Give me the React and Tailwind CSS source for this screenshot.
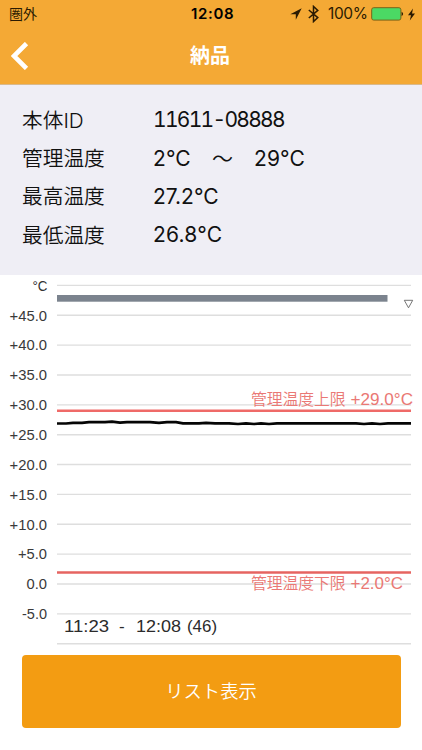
const SYSTEM = "font-['Inter','Noto_Sans_CJK_JP',sans-serif]";

const readings = [
  { label: '本体ID', value: '11611-08888', spacing: 'tabular-nums tracking-[-1.72px]' },
  {
    label: '管理温度',
    value: <>2°C<span className="font-[350]">　～　</span>29°C</>,
    spacing: 'tracking-[0.1px]',
  },
  { label: '最高温度', value: '27.2°C', spacing: 'tracking-[0px]' },
  { label: '最低温度', value: '26.8°C', spacing: 'tracking-[0.2px]' },
];

// [label, left edge of the text]
const ticks = [
  ['+45.0', 9.5], ['+40.0', 9.5], ['+35.0', 9.5], ['+30.0', 9.5], ['+25.0', 9.5], ['+20.0', 9.5],
  ['+15.0', 9.5], ['+10.0', 9.5], ['+5.0', 18], ['0.0', 26.5], ['-5.0', 22],
];

const gridY = (i) => 285.4 + i * 29.86;

function StatusBar() {
  return (
    <div className="relative flex h-7 items-center justify-between pl-[9px] pr-[7px] text-[#2b1b02]">
      <span className="text-[14px] leading-7">圏外</span>
      <span className="absolute left-[191px] text-[15px] font-semibold leading-7 tracking-[0.65px] text-black">12:08</span>
      <div className="flex items-center">
        <svg width="12" height="12" viewBox="0 0 12 12" className="mr-[6px]">
          <path d="M11.7 0.3 L0.3 6.2 H5.8 V11.7 Z" fill="#2b1b02" />
        </svg>
        <svg width="11" height="18" viewBox="0 0 11 18" className="mr-[9px]">
          <path d="M0.8 5 L9.8 12.6 L5.5 16.6 V1.4 L9.8 5.4 L0.8 13" fill="none" stroke="#2b1b02" strokeWidth="1.5" />
        </svg>
        <span className="mr-[4px] w-[39px] whitespace-nowrap text-[15.5px] leading-7 tracking-[-0.4px]">100%</span>
        <svg width="33" height="14" viewBox="0 0 33 14" className="mr-[4px]">
          <rect x="0.7" y="0.7" width="29.2" height="12.4" rx="2" fill="#4bd964" stroke="#7a6318" strokeWidth="1" />
          <path d="M30.6 4.8 Q33.6 7 30.6 9.2 Z" fill="#2b1b02" />
        </svg>
        <svg width="7" height="13" viewBox="0 0 7 13">
          <path d="M5 0.5 L0 7.3 H3 L1.8 12.5 L7 5.6 H4 Z" fill="#2b1b02" />
        </svg>
      </div>
    </div>
  );
}

function Chart() {
  return (
    <svg
      width="422"
      height="372"
      viewBox="0 275 422 372"
      className="block font-['Liberation_Sans','Noto_Sans_CJK_JP',sans-serif]"
    >
      {Array.from({ length: 13 }, (_, i) => (
        <line key={i} x1="57" x2="411" y1={gridY(i)} y2={gridY(i)} stroke="#dedede" strokeWidth="1.4" />
      ))}
      <text x="32.5" y="291" fontSize="14.5" fill="#333" textLength="15" lengthAdjust="spacingAndGlyphs">°C</text>
      {ticks.map(([label, x], i) => (
        <text key={label} x={x} y={320.6 + i * 29.86} fontSize="14.3" fill="#3a3a3a" textLength={47 - x} lengthAdjust="spacingAndGlyphs">
          {label}
        </text>
      ))}
      <rect x="57" y="295" width="330.5" height="6.7" fill="#7b838e" />
      <path d="M404.3 300.3 H412.7 L408.5 307.8 Z" fill="#fff" stroke="#666" strokeWidth="0.9" />
      <line x1="57" x2="411" y1="410.8" y2="410.8" stroke="#ef6a68" strokeWidth="2.5" />
      <line x1="57" x2="411" y1="572.4" y2="572.4" stroke="#e66461" strokeWidth="2.5" />
      <polyline
        points="57,423.5 66,423.5 73,422.8 82,422.8 89,422.2 105,422.2 112,421.6 120,422.7 127,422.2 150,422.2 159,422.8 167,422.2 176,422.2 183,423.3 199,423.3 206,422.8 215,423.4 229,423.4 238,424 246,423.4 254,424 261,423.4 269,424 277,423.4 356,423.4 364,424 372,423.4 380,424 388,423.4 411,423.4"
        fill="none"
        stroke="#050505"
        strokeWidth="2.7"
        strokeLinejoin="round"
      />
      <g fill="#ea7874" fontSize="15.8">
        <text x="251" y="404.9" textLength="94.5" fontWeight="350">管理温度上限</text>
        <text x="350.5" y="405.2" fontSize="17" textLength="62.5" lengthAdjust="spacingAndGlyphs">+29.0°C</text>
        <text x="251" y="589" textLength="94.5" fontWeight="350">管理温度下限</text>
        <text x="350.5" y="589.2" fontSize="17" textLength="52.5" lengthAdjust="spacingAndGlyphs">+2.0°C</text>
      </g>
      <g fill="#2b2b2b" fontSize="17">
        <text x="64" y="631.7" textLength="45" lengthAdjust="spacingAndGlyphs">11:23</text>
        <text x="119" y="631.7">-</text>
        <text x="136" y="631.7" textLength="45" lengthAdjust="spacingAndGlyphs">12:08</text>
        <text x="187" y="631.7" textLength="30" lengthAdjust="spacingAndGlyphs">(46)</text>
      </g>
    </svg>
  );
}

export default function App() {
  return (
    <div className={`flex h-[750px] w-[422px] flex-col overflow-hidden bg-white ${SYSTEM}`}>
      <header className="h-[85px] shrink-0 border-b border-[#d9b98c] bg-[#f4a935]">
        <StatusBar />
        <div className="flex h-14 items-center pl-[11px]">
          <svg width="18" height="28" viewBox="0 0 18 28">
            <path d="M15.5 1.5 L3 14 L15.5 26.5" fill="none" stroke="#fff" strokeWidth="4.6" />
          </svg>
          <h1 className="ml-[161px] text-[20px] font-bold leading-7 text-white">納品</h1>
        </div>
      </header>

      <section className="h-[190px] shrink-0 bg-[#efeef5] pl-[22px] pt-[16px] text-[#111]">
        {readings.map(({ label, value, spacing }) => (
          <div key={label} className="flex h-[38.3px] items-center whitespace-nowrap">
            <span className="w-[131px] text-[20.7px] font-[350]">{label}</span>
            <span className={`text-[21px] ${spacing}`}>{value}</span>
          </div>
        ))}
      </section>

      <Chart />

      <button className="ml-[21.5px] mt-[8px] flex h-[73px] w-[379px] shrink-0 items-center justify-center rounded-[4px] bg-[#f39c12] text-[18.3px] font-[350] text-white">
        リスト表示
      </button>
    </div>
  );
}
